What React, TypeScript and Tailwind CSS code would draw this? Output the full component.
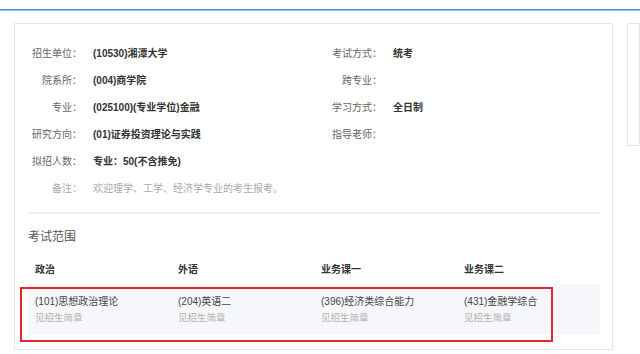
import React from 'react'

const font = { fontFamily: '"Liberation Sans", "Noto Sans CJK SC", sans-serif' }

const left = [
  { label: '招生单位：', value: '(10530)湘潭大学' },
  { label: '院系所：', value: '(004)商学院' },
  { label: '专业：', value: '(025100)(专业学位)金融' },
  { label: '研究方向：', value: '(01)证券投资理论与实践' },
  { label: '拟招人数：', value: '专业：50(不含推免)' },
]

const right = [
  { label: '考试方式：', value: '统考' },
  { label: '跨专业：', value: '' },
  { label: '学习方式：', value: '全日制' },
  { label: '指导老师：', value: '' },
]

const exams = [
  { head: '政治', name: '(101)思想政治理论' },
  { head: '外语', name: '(204)英语二' },
  { head: '业务课一', name: '(396)经济类综合能力' },
  { head: '业务课二', name: '(431)金融学综合' },
]

function Field({ label, value }: { label: string; value: string }) {
  return (
    <div className="flex items-center h-[27px]">
      <div className="w-[54px] text-right text-[10px] text-[#666]">{label}</div>
      <div className="ml-[11px] text-[10px] font-bold text-[#333]">{value}</div>
    </div>
  )
}

export default function App() {
  return (
    <div className="w-[640px] h-[354px] overflow-hidden bg-white" style={font}>
      <div className="h-[9px]" />
      <div className="h-[1px] bg-[#3a8ad6]" />
      <div className="h-[1px] bg-[#9cc6ee]" />

      <div className="flex mt-[12px]">
        {/* main card */}
        <div className="relative ml-[14px] w-[599px] h-[327px] border border-[#e6e6e6] px-[13px]">
          <div className="flex pt-[16px]">
            <div className="w-[300px]">
              {left.map((f) => (
                <Field key={f.label} {...f} />
              ))}
              <div className="flex items-center h-[27px]">
                <div className="w-[54px] text-right text-[10px] text-[#aaa]">备注：</div>
                <div className="ml-[11px] text-[10px] text-[#aaa]">欢迎理学、工学、经济学专业的考生报考。</div>
              </div>
            </div>
            <div className="flex-1">
              {right.map((f) => (
                <Field key={f.label} {...f} />
              ))}
            </div>
          </div>

          <div className="mt-[10px] h-[2px] bg-[#f0f0f0] w-[572px]" />

          <div className="mt-[15px] text-[12px] text-[#555] leading-[16px]">考试范围</div>

          <div className="mt-[9px] w-[572px]">
            <div className="grid grid-cols-4 h-[30px] items-center">
              {exams.map((e) => (
                <div key={e.head} className="pl-[7px] text-[10px] font-bold text-[#333]">
                  {e.head}
                </div>
              ))}
            </div>
            <div className="grid grid-cols-4 h-[51px] bg-[#f5f7fa] content-center">
              {exams.map((e) => (
                <div key={e.head} className="pl-[7px]">
                  <div className="text-[10px] text-[#444] leading-[16px]">{e.name}</div>
                  <div className="text-[9.5px] text-[#b0b0b0] leading-[15px]">见招生简章</div>
                </div>
              ))}
            </div>
          </div>

          {/* red annotation box */}
          <div className="absolute left-[5px] top-[263px] w-[533px] h-[55px] border-2 border-[#e3262c]" />
        </div>

        {/* side card */}
        <div className="ml-[14px] flex-1 h-[123px] border border-[#e6e6e6]" />
      </div>
    </div>
  )
}
